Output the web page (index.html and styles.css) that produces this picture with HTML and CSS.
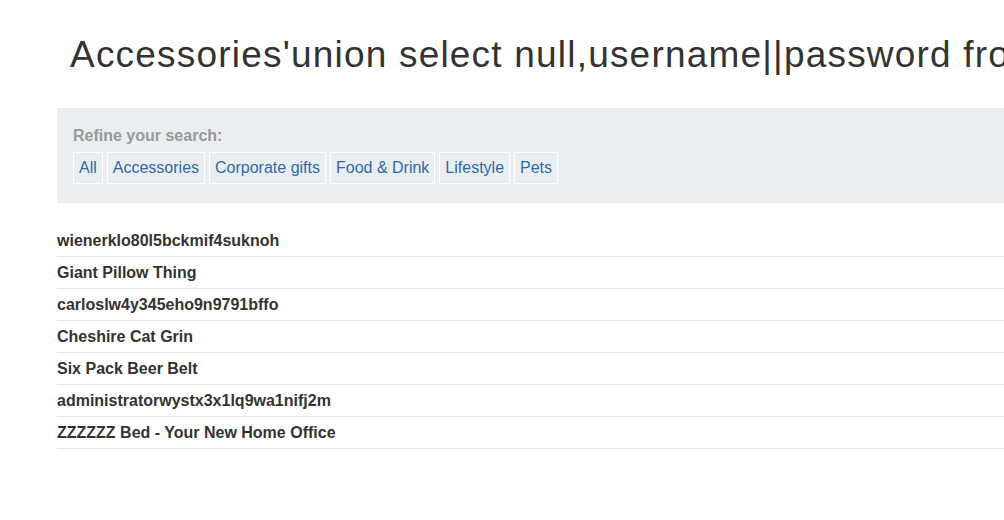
FILE: index.html
```html
<!DOCTYPE html>
<html>
<head>
<meta charset="utf-8">
<link rel="stylesheet" href="styles.css">
</head>
<body>
<div class="page">
  <h1 class="title">Accessories'union select null,username||password from users--</h1>
  <section class="filters">
    <p class="filters-label">Refine your search:</p>
    <div class="filter-list">
      <a class="filter">All</a>
      <a class="filter">Accessories</a>
      <a class="filter">Corporate gifts</a>
      <a class="filter">Food &amp; Drink</a>
      <a class="filter">Lifestyle</a>
      <a class="filter">Pets</a>
    </div>
  </section>
  <table class="results">
    <tbody>
      <tr><th>wienerklo80l5bckmif4suknoh</th></tr>
      <tr><th>Giant Pillow Thing</th></tr>
      <tr><th>carloslw4y345eho9n9791bffo</th></tr>
      <tr><th>Cheshire Cat Grin</th></tr>
      <tr><th>Six Pack Beer Belt</th></tr>
      <tr><th>administratorwystx3x1lq9wa1nifj2m</th></tr>
      <tr><th>ZZZZZZ Bed - Your New Home Office</th></tr>
    </tbody>
  </table>
</div>
</body>
</html>
```

FILE: styles.css
```css
html, body {
  margin: 0;
  padding: 0;
  overflow: hidden;
  background: #fff;
}
body {
  font-family: "Liberation Sans", Arial, sans-serif;
  color: #333332;
}
.page {
  width: 1200px;
  padding-left: 57px;
}
.title {
  margin: 35px 0 0 13px;
  font-size: 37px;
  letter-spacing: 1.2px;
  line-height: 40px;
  font-weight: normal;
  white-space: nowrap;
  color: #333332;
}
.filters {
  margin-top: 33px;
  background: #ebeef1;
  padding: 18px 16px 19px;
}
.filters-label {
  margin: 0 0 6px;
  font-size: 16px;
  line-height: 20px;
  font-weight: bold;
  color: #999;
}
.filter-list {
  display: flex;
  gap: 4px;
}
.filter {
  display: block;
  border: 1px solid #fff;
  padding: 0 5px;
  font-size: 16px;
  line-height: 30px;
  color: #2d6ba6;
  text-decoration: none;
}
.results {
  margin-top: 22px;
  width: 100%;
  border-collapse: collapse;
}
.results th {
  text-align: left;
  padding: 0;
  height: 31px;
  border-bottom: 1px solid #e6e6e6;
  font-size: 16px;
  font-weight: bold;
  color: #333332;
}
```
